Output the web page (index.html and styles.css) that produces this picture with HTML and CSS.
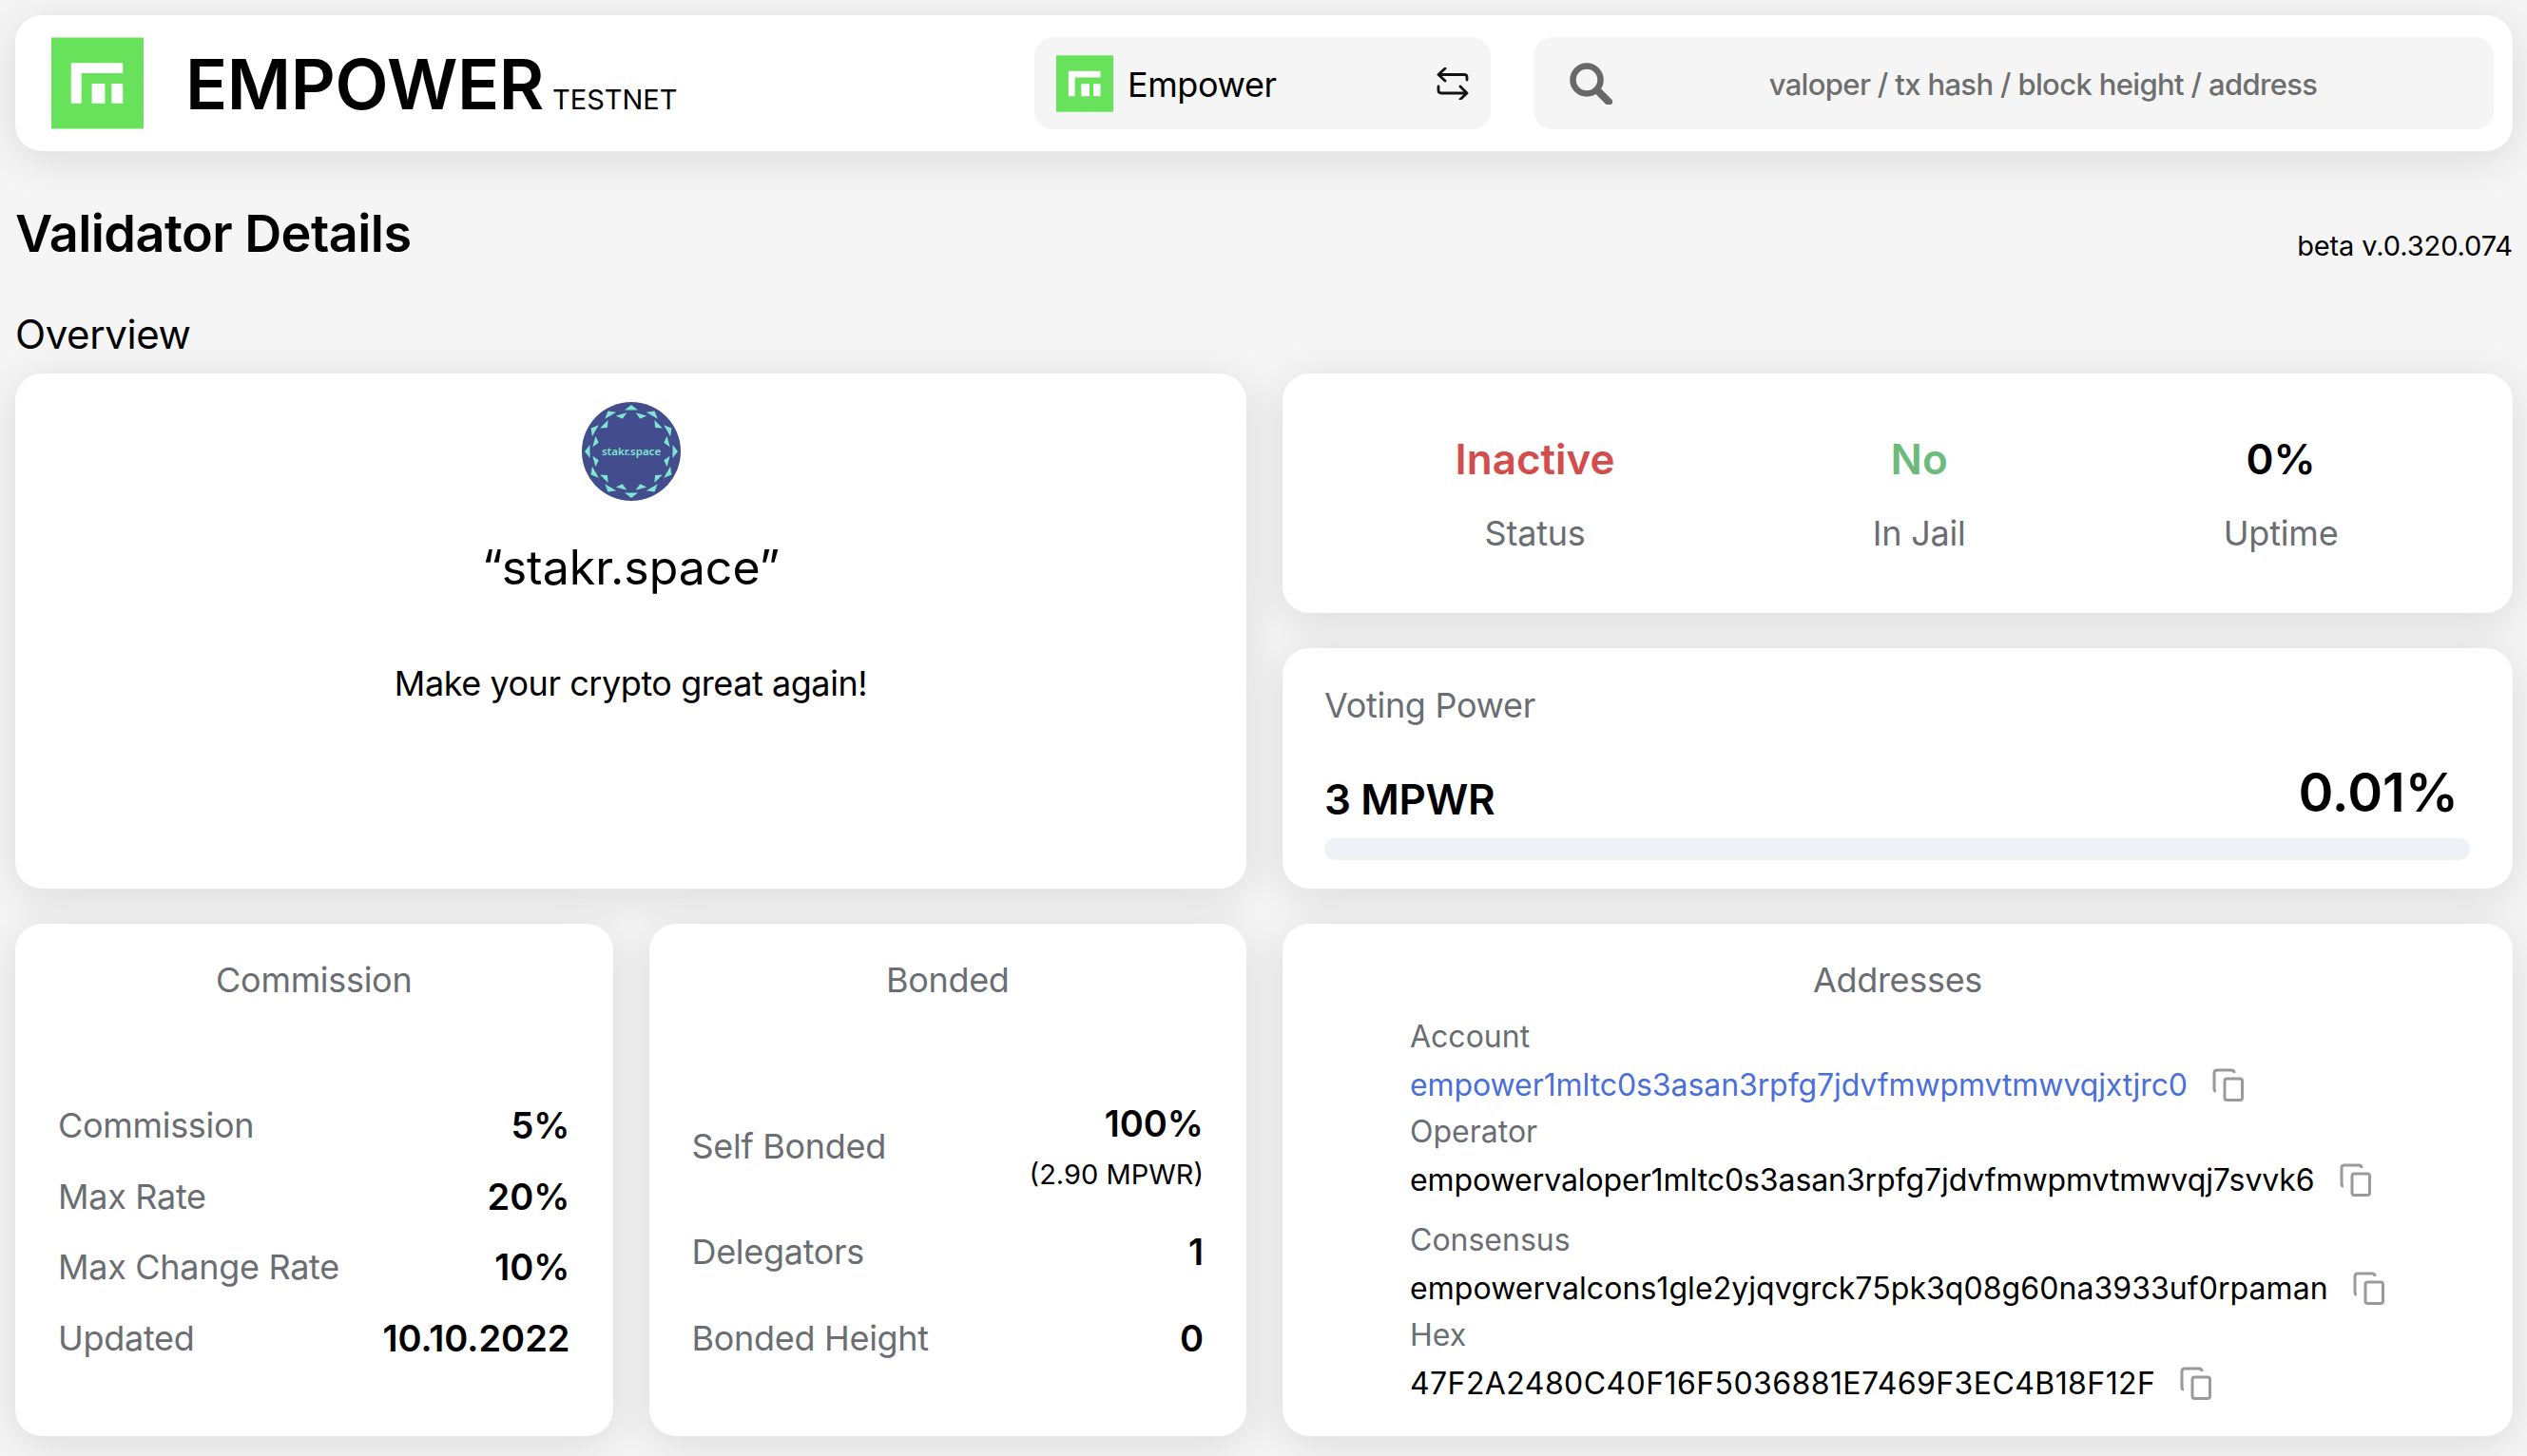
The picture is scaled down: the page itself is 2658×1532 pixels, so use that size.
FILE: index.html
```html
<!DOCTYPE html>
<html lang="en">
<head>
<meta charset="utf-8">
<title>Validator Details</title>
<link rel="stylesheet" href="styles.css">
</head>
<body>
<svg class="defs" width="0" height="0" aria-hidden="true">
  <defs>
    <symbol id="mark" viewBox="0 0 98 97">
      <rect width="98" height="97" fill="#68e25a"/>
      <path d="M21 27H76V38H32V70H21Z M43 49H57V70H43Z M64 49H76V70H64Z" fill="#fff"/>
    </symbol>
    <symbol id="copy" viewBox="0 0 33 35">
      <path d="M20 2H5Q2 2 2 5V22Q2 24 4 24" fill="none" stroke="#9a9a9a" stroke-width="3"/>
      <path d="M20 2Q23 2 23 5" fill="none" stroke="#9a9a9a" stroke-width="3"/>
      <rect x="13" y="11" width="18.500" height="22.500" rx="2.500" fill="#fff" stroke="#9a9a9a" stroke-width="3"/>
    </symbol>
    <path id="tri-out" d="M52 3L59 8.500H45Z" fill="#7fe6d2"/>
    <path id="tri-in" d="M46 11.500H58L52 16.500Z" fill="#7fe6d2"/>
  </defs>
</svg>

<header class="topbar">
  <svg class="logo"><use href="#mark"/></svg>
  <div class="brand"><span class="brand-name">EMPOWER</span><span class="brand-tag">TESTNET</span></div>
  <div class="chain">
    <svg class="chain-logo"><use href="#mark"/></svg>
    <span class="chain-name">Empower</span>
    <svg class="swap" viewBox="0 0 34 34"><path d="M9 1L2 7.500L9 14M2.500 7.500H29Q32 7.500 32 10V13M2 20V24Q2 27 5 27H31M25 20L32 27L25 33.500" fill="none" stroke="#111" stroke-width="2.800" stroke-linecap="round" stroke-linejoin="round"/></svg>
  </div>
  <div class="search">
    <svg class="search-icon" viewBox="0 0 46 44"><circle cx="18" cy="18" r="14.500" fill="none" stroke="#686868" stroke-width="6.500"/><path d="M30 30L41 41" stroke="#686868" stroke-width="8" stroke-linecap="round"/></svg>
    <span class="search-text">valoper / tx hash / block height / address</span>
  </div>
</header>

<div class="title-row">
  <h1 class="page-title">Validator Details</h1>
  <span class="version">beta v.0.320.074</span>
</div>
<h2 class="section-title">Overview</h2>

<main class="grid">
  <section class="card profile">
    <svg class="avatar" viewBox="0 0 104 104">
      <circle cx="52" cy="52" r="52" fill="#434c8c"/>
      <g>
        <use href="#tri-out"/><use href="#tri-out" transform="rotate(30 52 52)"/><use href="#tri-out" transform="rotate(60 52 52)"/><use href="#tri-out" transform="rotate(90 52 52)"/><use href="#tri-out" transform="rotate(120 52 52)"/><use href="#tri-out" transform="rotate(150 52 52)"/><use href="#tri-out" transform="rotate(180 52 52)"/><use href="#tri-out" transform="rotate(210 52 52)"/><use href="#tri-out" transform="rotate(240 52 52)"/><use href="#tri-out" transform="rotate(270 52 52)"/><use href="#tri-out" transform="rotate(300 52 52)"/><use href="#tri-out" transform="rotate(330 52 52)"/>
        <use href="#tri-in" transform="rotate(15 52 52)"/><use href="#tri-in" transform="rotate(45 52 52)"/><use href="#tri-in" transform="rotate(75 52 52)"/><use href="#tri-in" transform="rotate(105 52 52)"/><use href="#tri-in" transform="rotate(135 52 52)"/><use href="#tri-in" transform="rotate(165 52 52)"/><use href="#tri-in" transform="rotate(195 52 52)"/><use href="#tri-in" transform="rotate(225 52 52)"/><use href="#tri-in" transform="rotate(255 52 52)"/><use href="#tri-in" transform="rotate(285 52 52)"/><use href="#tri-in" transform="rotate(315 52 52)"/><use href="#tri-in" transform="rotate(345 52 52)"/>
      </g>
      <text class="avatar-text" x="52" y="55.500" text-anchor="middle">stakr.space</text>
    </svg>
    <div class="moniker">“stakr.space”</div>
    <p class="tagline">Make your crypto great again!</p>
  </section>

  <div class="right-stack">
    <section class="card status">
      <div class="stat"><div class="stat-value red">Inactive</div><div class="stat-label">Status</div></div>
      <div class="stat"><div class="stat-value green">No</div><div class="stat-label">In Jail</div></div>
      <div class="stat"><div class="stat-value">0%</div><div class="stat-label">Uptime</div></div>
    </section>
    <section class="card voting">
      <div class="label voting-label">Voting Power</div>
      <div class="voting-row"><span class="voting-amount">3 MPWR</span><span class="voting-pct">0.01%</span></div>
      <div class="bar"></div>
    </section>
  </div>

  <div class="bottom-left">
    <section class="card info">
      <div class="label card-title">Commission</div>
      <div class="rows rows-commission">
        <div class="row"><span class="label">Commission</span><span class="value">5%</span></div>
        <div class="row"><span class="label">Max Rate</span><span class="value">20%</span></div>
        <div class="row"><span class="label">Max Change Rate</span><span class="value">10%</span></div>
        <div class="row"><span class="label">Updated</span><span class="value">10.10.2022</span></div>
      </div>
    </section>
    <section class="card info">
      <div class="label card-title">Bonded</div>
      <div class="rows rows-bonded">
        <div class="row row-self"><span class="label self-label">Self Bonded</span><span class="value-stack"><span class="value">100%</span><span class="sub-value">(2.90 MPWR)</span></span></div>
        <div class="row row-delegators"><span class="label">Delegators</span><span class="value">1</span></div>
        <div class="row row-height"><span class="label">Bonded Height</span><span class="value">0</span></div>
      </div>
    </section>
  </div>

  <section class="card addresses">
    <div class="label card-title">Addresses</div>
    <div class="addr-list">
      <div class="addr-label">Account</div>
      <div class="addr-line"><a class="addr link" href="#">empower1mltc0s3asan3rpfg7jdvfmwpmvtmwvqjxtjrc0</a><svg class="copy"><use href="#copy"/></svg></div>
      <div class="addr-label">Operator</div>
      <div class="addr-line"><span class="addr">empowervaloper1mltc0s3asan3rpfg7jdvfmwpmvtmwvqj7svvk6</span><svg class="copy"><use href="#copy"/></svg></div>
      <div class="addr-label addr-label-gap">Consensus</div>
      <div class="addr-line"><span class="addr addr-consensus">empowervalcons1gle2yjqvgrck75pk3q08g60na3933uf0rpaman</span><svg class="copy"><use href="#copy"/></svg></div>
      <div class="addr-label">Hex</div>
      <div class="addr-line"><span class="addr addr-hex">47F2A2480C40F16F5036881E7469F3EC4B18F12F</span><svg class="copy"><use href="#copy"/></svg></div>
    </div>
  </section>
</main>
</body>
</html>
```

FILE: styles.css
```css
* { box-sizing: border-box; }
html, body { margin: 0; height: 1532px; overflow: hidden; }
body {
  padding: 16px 15px 0 16px;
  background: #f5f5f5;
  color: #000;
  font-family: Inter, "Liberation Sans", sans-serif;
  font-size: 36px;
}
.defs { position: absolute; }

.card, .topbar {
  background: #fff;
  border-radius: 28px;
  box-shadow: 0 8px 48px rgba(0, 0, 0, 0.11);
}

.topbar {
  display: flex;
  align-items: center;
  height: 143px;
  padding: 0 20px 0 38px;
}
.logo { width: 97px; height: 97px; flex: none; }
.brand { display: flex; align-items: baseline; margin-left: 44px; width: 893px; flex: none; padding-top: 2px; }
.brand-name { font-size: 73px; font-weight: 600; line-height: 88px; letter-spacing: -0.4px; }
.brand-tag { font-size: 29px; margin-left: 9px; }
.chain {
  display: flex;
  align-items: center;
  width: 480px;
  height: 97px;
  flex: none;
  padding: 0 23px;
  background: #f5f5f5;
  border-radius: 20px;
}
.chain-logo { width: 60px; height: 60px; flex: none; }
.chain-name { margin-left: 15px; padding-top: 2px; font-size: 36px; letter-spacing: -0.4px; flex: 1; }
.swap { width: 34px; height: 34px; flex: none; }
.search {
  display: flex;
  align-items: center;
  flex: 1;
  height: 97px;
  margin-left: 45px;
  padding: 0 22px 0 38px;
  background: #f5f5f5;
  border-radius: 20px;
}
.search-icon { width: 46px; height: 44px; flex: none; }
.search-text { flex: 1; text-align: center; padding-top: 2px; font-size: 31px; font-weight: 500; letter-spacing: -0.65px; color: #6e6e6e; }

.title-row {
  display: flex;
  justify-content: space-between;
  align-items: center;
  height: 102px;
  margin-top: 36px;
}
.page-title { margin: 0; font-size: 54px; font-weight: 600; line-height: 70px; letter-spacing: -0.55px; }
.version { font-size: 29px; padding-top: 25px; letter-spacing: -0.1px; }
.section-title { margin: 22px 0 0; font-size: 42px; font-weight: 400; line-height: 54px; letter-spacing: -0.4px; height: 74px; padding-top: 6px; }

.grid {
  display: grid;
  grid-template-columns: 1295px 1fr;
  grid-template-rows: 542px 539px;
  column-gap: 38px;
  row-gap: 37px;
}

.label { color: #6a6e73; }

.profile { display: flex; flex-direction: column; align-items: center; padding-top: 30px; }
.avatar { width: 104px; height: 104px; display: block; }
.avatar-text { font-family: "Noto Sans", sans-serif; font-size: 11.500px; font-weight: 600; fill: #7fe6d2; }
.moniker { margin-top: 35px; font-size: 50px; line-height: 70px; }
.tagline { margin: 62px 0 0; font-size: 36px; line-height: 50px; letter-spacing: -0.45px; }

.right-stack { display: grid; grid-template-rows: 252px 253px; row-gap: 37px; }
.status { display: flex; justify-content: space-around; padding: 62px 48px 0 46px; }
.stat { text-align: center; }
.stat-value { font-size: 44px; font-weight: 600; line-height: 56px; }
.stat-label { margin-top: 22px; font-size: 36px; line-height: 56px; letter-spacing: -0.2px; color: #6a6e73; }
.red { color: #d24d4b; }
.green { color: #6cbb7a; }

.voting { padding: 32px 45px 0 44px; }
.voting-label { font-size: 36px; line-height: 56px; letter-spacing: -0.3px; }
.voting-row { display: flex; justify-content: space-between; align-items: flex-end; height: 80px; margin-top: 21px; padding-right: 12px; }
.voting-amount { font-size: 44px; font-weight: 600; line-height: 60px; letter-spacing: -0.4px; }
.voting-pct { font-size: 56px; font-weight: 600; line-height: 72px; padding-bottom: 1px; }
.bar { height: 23px; margin-top: 11px; background: #eef1f6; border-radius: 12px; }

.bottom-left { display: grid; grid-template-columns: 1fr 1fr; column-gap: 38px; }
.info { padding: 30px 45px 0; }
.card-title { text-align: center; font-size: 36px; line-height: 58px; letter-spacing: -0.3px; }
.rows { display: flex; flex-direction: column; }
.rows-commission { margin-top: 94px; row-gap: 14.600px; }
.rows-bonded { margin-top: 89px; }
.row { display: flex; justify-content: space-between; align-items: center; height: 60px; font-size: 36px; letter-spacing: -0.3px; }
.value { font-size: 38px; font-weight: 600; letter-spacing: 0; }
.row-self { height: 110px; }
.self-label { padding-top: 4px; }
.value-stack { display: flex; flex-direction: column; align-items: flex-end; row-gap: 4px; }
.value-stack .value { line-height: 60px; }
.sub-value { font-size: 29px; line-height: 40px; letter-spacing: 0; }
.row-delegators { margin-top: 28px; }
.row-height { margin-top: 31px; }

.addresses { padding: 30px 46px 0; }
.addr-list { padding-left: 88px; margin-top: 6px; }
.addr-label { font-size: 32px; line-height: 50px; color: #6a6e73; }
.addr-label-gap { margin-top: 14px; }
.addr-line { display: flex; align-items: center; height: 50px; font-size: 32px; }
.addr { color: #000; text-decoration: none; letter-spacing: -0.08px; }
.addr-consensus { letter-spacing: 0.06px; }
.addr-hex { letter-spacing: 0.42px; }
.link { color: #4a6fdc; }
.copy { width: 33px; height: 35px; margin-left: 26px; flex: none; }
```
